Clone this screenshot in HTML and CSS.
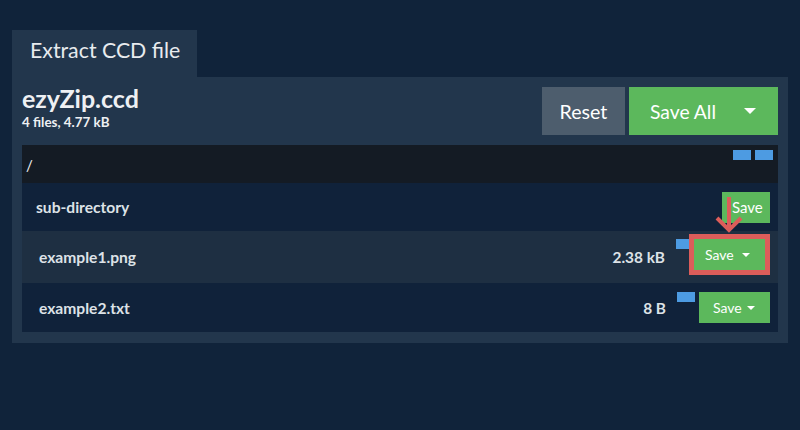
FILE: index.html
```html
<!DOCTYPE html>
<html lang="en">
<head>
    <meta charset="UTF-8">
    <title>Extract CCD file</title>
    <link rel="stylesheet" href="styles.css">
</head>
<body>

<div class="wrapper">
    <div class="tab">Extract CCD file</div>
    <div class="panel">
        <div class="header">
            <div class="archive">
                <div class="archive_name">ezyZip.ccd</div>
                <div class="archive_info">4 files, 4.77 kB</div>
            </div>
            <div class="actions">
                <button class="btn btn_reset">Reset</button>
                <button class="btn btn_save_all">Save All <span class="caret caret_big"></span></button>
            </div>
        </div>

        <div class="files">
            <div class="row row_root">
                <span class="path">/</span>
                <span class="flags">
                    <span class="flag"></span>
                    <span class="flag"></span>
                </span>
            </div>
            <div class="row row_dir">
                <span class="name dir_name">sub-directory</span>
                <button class="btn btn_save btn_plain">Save</button>
            </div>
            <div class="row row_file row_alt">
                <span class="name">example1.png</span>
                <span class="size">2.38 kB</span>
                <span class="flag flag_file"></span>
                <span class="highlight">
                    <button class="btn btn_save">Save <span class="caret"></span></button>
                </span>
            </div>
            <div class="row row_file row_last">
                <span class="name">example2.txt</span>
                <span class="size">8 B</span>
                <span class="flag flag_file"></span>
                <button class="btn btn_save btn_wide">Save <span class="caret"></span></button>
            </div>

            <!-- pointer to the highlighted button -->
            <svg class="arrow" width="32" height="40" viewBox="0 0 32 40">
                <path d="M16 2 V35 M4 23 L16 35 L28 23" fill="none" stroke="#dc5d5a" stroke-width="4"/>
            </svg>
        </div>
    </div>
</div>

</body>
</html>
```

FILE: styles.css
```css
body {
    background: #10233a;
    margin: 0;
    font-family: Lato, "Open Sans", sans-serif;
    color: #eef0f3;
}

.wrapper {
    padding: 30px 12px 0 12px;
}

.tab {
    display: inline-block;
    background: #22364c;
    padding: 7px 17px 0 18px;
    height: 40px;
    font-size: 21.3px;
    color: #e8ebee;
}

.panel {
    background: #22364c;
    padding: 10px 10px 11px 10px;
}

.header {
    display: flex;
    justify-content: space-between;
    align-items: flex-start;
}

.archive_name {
    font-size: 25px;
    font-weight: bold;
    line-height: 24px;
    margin-top: -1px;
}

.archive_info {
    font-size: 13.4px;
    font-weight: bold;
    line-height: 16px;
    margin-top: 4px;
}

.actions {
    display: flex;
    gap: 4px;
}

.btn {
    border: none;
    color: #ffffff;
    font-family: Lato, "Open Sans", sans-serif;
    cursor: pointer;
}

.btn_reset {
    background: #4d5d6d;
    width: 83px;
    height: 48px;
    font-size: 19.6px;
}

.btn_save_all {
    background: #5cb85c;
    width: 149px;
    height: 48px;
    font-size: 19.3px;
    text-align: left;
    padding-left: 21px;
    display: flex;
    align-items: center;
}

.caret {
    display: inline-block;
    width: 0;
    height: 0;
    border-left: 4px solid transparent;
    border-right: 4px solid transparent;
    border-top: 4px solid #ffffff;
    margin-left: auto;
    margin-right: 9px;
}

.caret_big {
    border-left-width: 6px;
    border-right-width: 6px;
    border-top-width: 6px;
    margin-right: 16px;
}

.files {
    position: relative;
    margin-top: 10px;
}

.row {
    display: flex;
    align-items: center;
    background: #10223a;
}

.row_root {
    background: #141b24;
    height: 38px;
    align-items: stretch;
}

.path {
    font-size: 15px;
    padding: 11px 0 0 4px;
}

.flags {
    margin-left: auto;
    display: flex;
    gap: 4px;
    padding: 5px 5px 0 0;
}

.flag {
    display: block;
    width: 18px;
    height: 10px;
    background: #4d9be2;
}

.row_dir {
    height: 48px;
    justify-content: space-between;
    padding: 0 8px 0 14px;
}

.dir_name {
    font-size: 17.5px;
    font-weight: bold;
    color: #eef0f3;
}

.row_file {
    height: 49px;
    padding: 0 8px 0 17px;
}

.row_alt {
    background: #1e2f42;
    height: 52px;
}

.name {
    font-size: 15.6px;
    font-weight: bold;
    color: #dde2e7;
}

.size {
    margin-left: auto;
    font-size: 15.4px;
    font-weight: bold;
    color: #dde2e7;
    margin-right: 11px;
}

.flag_file {
    align-self: flex-start;
    margin-top: 8px;
    margin-right: -4px;
    width: 17px;
}

.row_last .flag_file {
    margin-top: 9px;
    margin-right: 4px;
    width: 18px;
}

.btn_save {
    background: #5cb85c;
    width: 71px;
    height: 31px;
    font-size: 14px;
    display: flex;
    align-items: center;
    padding-left: 11px;
}

.btn_plain {
    width: 48px;
    padding-left: 10px;
    font-size: 15px;
}

.btn_wide {
    width: 71px;
    padding-left: 14px;
}

.highlight {
    display: block;
    border: 5px solid #dc5d5a;
    margin-bottom: 5px;
}

.arrow {
    position: absolute;
    left: 691px;
    top: 50px;
}
```
